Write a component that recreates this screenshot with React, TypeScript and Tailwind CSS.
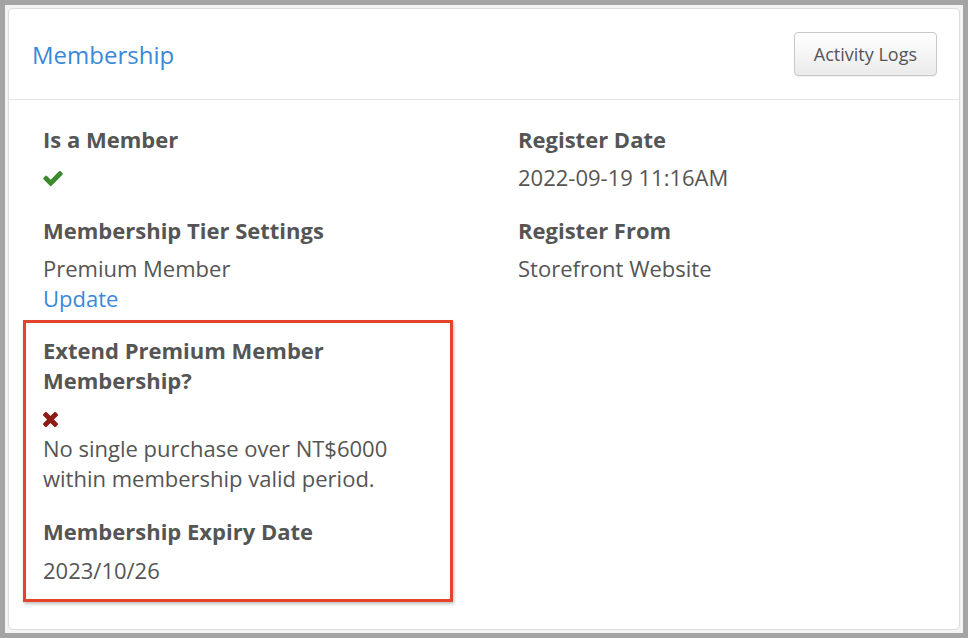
import React from "react";

const Check = () => (
  <svg width="20" height="15" viewBox="121 334 1550 1188" className="block">
    <path
      fill="#3b8a2b"
      d="M1671 566q0 40-28 68l-724 724-136 136q-28 28-68 28t-68-28l-136-136-362-362q-28-28-28-68t28-68l136-136q28-28 68-28t68 28l294 295 656-657q28-28 68-28t68 28l136 136q28 28 28 68z"
    />
  </svg>
);

const Cross = () => (
  <svg width="15" height="15" viewBox="110 366 1188 1188" className="block">
    <path
      fill="#8c1c14"
      d="M1298 1322q0 40-28 68l-136 136q-28 28-68 28t-68-28l-294-294-294 294q-28 28-68 28t-68-28l-136-136q-28-28-28-68t28-68l294-294-294-294q-28-28-28-68t28-68l136-136q28-28 68-28t68 28l294 294 294-294q28-28 68-28t68 28l136 136q28 28 28 68t-28 68l-294 294 294 294q28 28 28 68z"
    />
  </svg>
);

const Label = ({ children }: { children: React.ReactNode }) => (
  <div className="text-[22px] leading-[30px] font-bold text-[#555] mb-[8px]">{children}</div>
);

const Value = ({ children }: { children: React.ReactNode }) => (
  <div className="text-[22px] leading-[30px] text-[#555]">{children}</div>
);

export default function App() {
  return (
    <div
      className="w-[968px] h-[638px] bg-[#a4a4a4] p-[5px]"
      style={{ fontFamily: '"Open Sans", "Noto Sans", sans-serif' }}
    >
      <div className="w-full h-full bg-[#f3f3f3] p-[3px]">
        <div className="w-full h-full bg-white border border-[#dcdcdc] rounded-[5px] flex flex-col">
          <div className="h-[91px] flex items-center justify-between pl-[23px] pr-[22px] border-b border-[#e4e4e4]">
            <div className="text-[24px] leading-[34px] text-[#3b88d8] pt-[2px]">Membership</div>
            <button className="h-[44px] px-[19px] rounded-[4px] border border-[#c8c8c8] bg-gradient-to-b from-white to-[#ebebeb] text-[18px] text-[#555] shadow-[0_1px_1px_rgba(0,0,0,0.06)]">
              Activity Logs
            </button>
          </div>
          <div className="flex pt-[24px] pl-[34px]">
            <div className="w-[475px]">
              <div className="mb-[23px]">
                <Label>Is a Member</Label>
                <div className="h-[30px] flex items-center pt-[2px]">
                  <Check />
                </div>
              </div>
              <div>
                <Label>Membership Tier Settings</Label>
                <Value>Premium Member</Value>
                <div className="text-[22px] leading-[30px] text-[#3b88d8]">Update</div>
              </div>
              <div className="mt-[7px] -ml-[20px] w-[430px] border-[3px] border-[#e6432e] px-[17px] pt-[12px] pb-[14px] shadow-[1px_2px_3px_rgba(0,0,0,0.25)]">
                <div className="mb-[23px]">
                  <Label>Extend Premium Member Membership?</Label>
                  <div className="h-[30px] flex items-center pt-[2px]">
                    <Cross />
                  </div>
                  <Value>No single purchase over NT$6000 within membership valid period.</Value>
                </div>
                <div>
                  <div className="text-[22px] leading-[30px] font-bold text-[#555] mb-[9px]">Membership Expiry Date</div>
                  <Value>2023/10/26</Value>
                </div>
              </div>
            </div>
            <div>
              <div className="mb-[23px]">
                <Label>Register Date</Label>
                <Value>2022-09-19 11:16AM</Value>
              </div>
              <div>
                <Label>Register From</Label>
                <Value>Storefront Website</Value>
              </div>
            </div>
          </div>
        </div>
      </div>
    </div>
  );
}
